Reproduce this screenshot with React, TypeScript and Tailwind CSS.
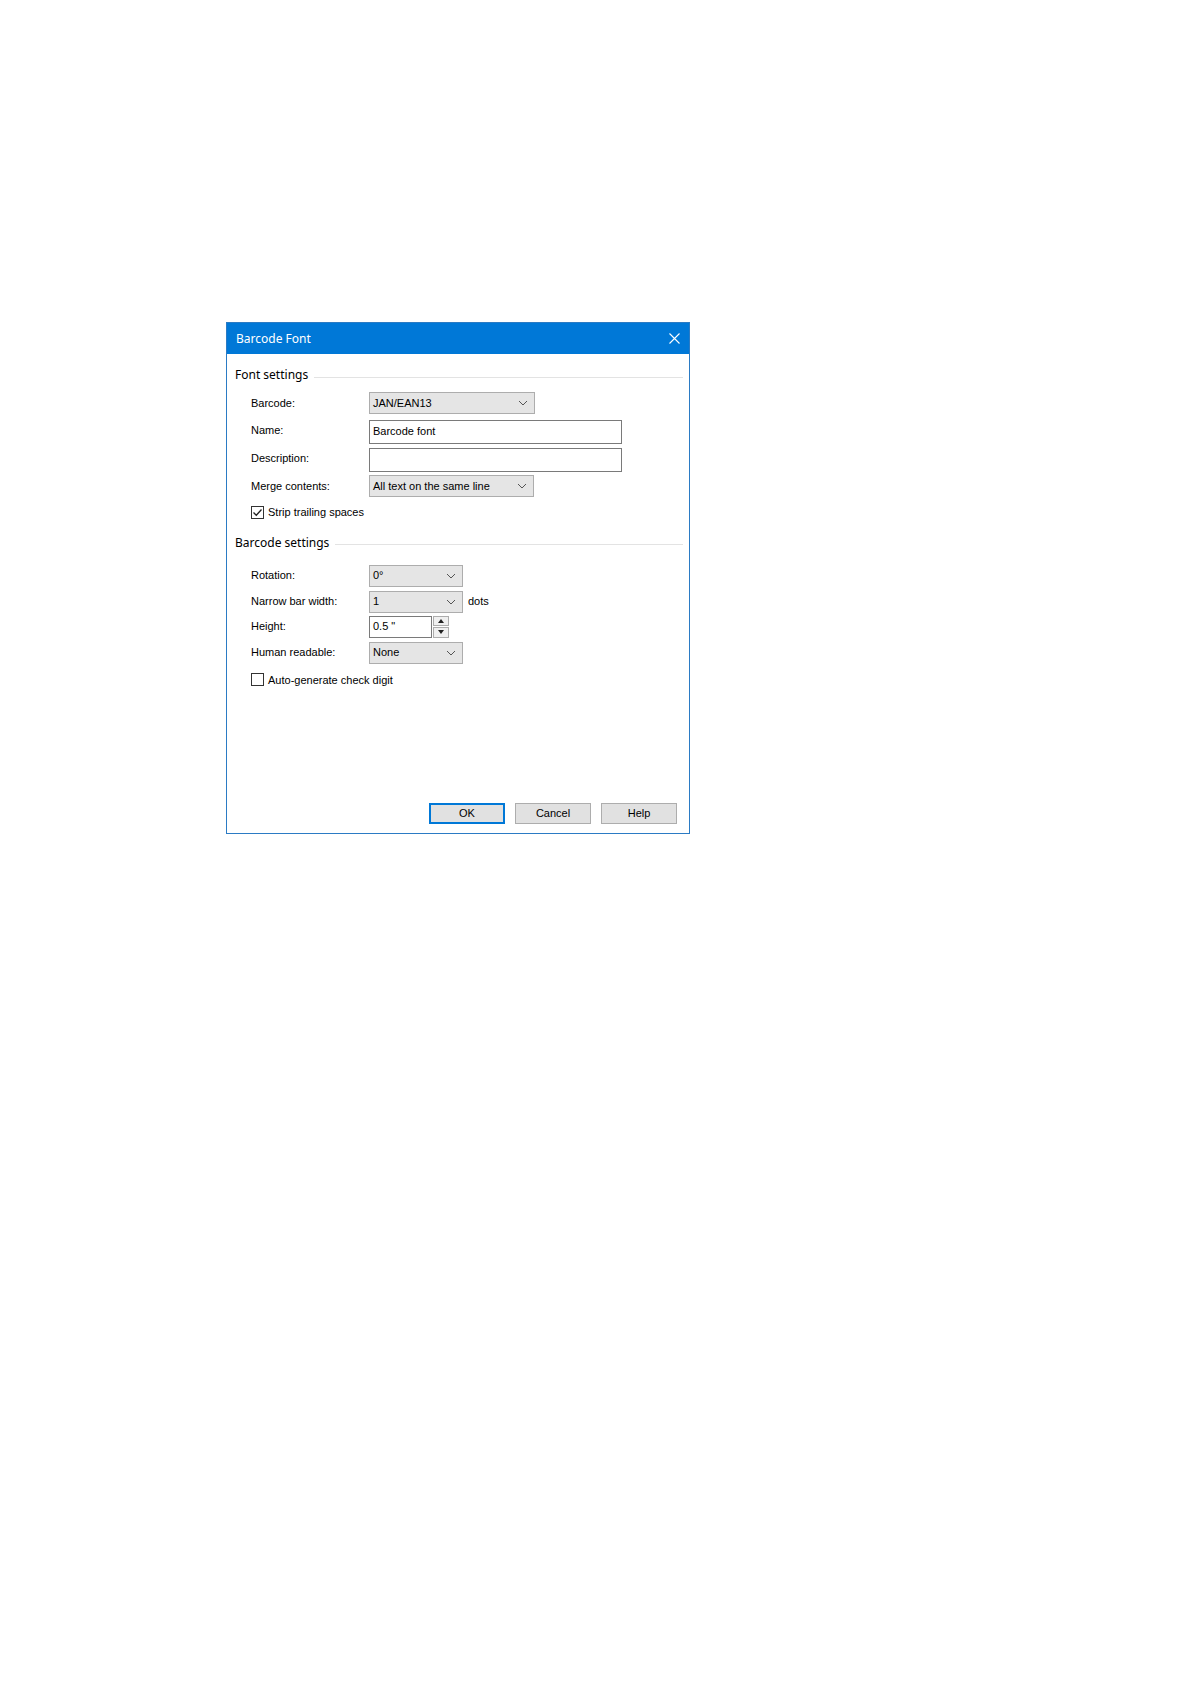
import React from "react";

const labelFont = "font-['Liberation_Sans',Arial,sans-serif] text-[11px] text-black";
const uiFont = "font-['Noto_Sans','Open_Sans',sans-serif]";

const Chevron = () => (
  <svg width="10" height="6" viewBox="0 0 10 6" className="shrink-0">
    <path d="M1 1 L5 5 L9 1" fill="none" stroke="#555" strokeWidth="1" />
  </svg>
);

const Dropdown = ({ value, width }: { value: string; width: string }) => (
  <div
    className={`flex h-[22px] items-center justify-between border border-[#adadad] bg-[#e5e5e5] pl-[3px] pr-[6px] ${width}`}
  >
    <span className={labelFont}>{value}</span>
    <Chevron />
  </div>
);

const TextBox = ({ value, width }: { value?: string; width: string }) => (
  <div
    className={`flex h-[24px] items-center border border-[#7a7a7a] bg-white pl-[3px] pb-[2px] ${width}`}
  >
    <span className={labelFont}>{value}</span>
  </div>
);

const Row = ({
  label,
  children,
  className,
  labelClass,
}: {
  label: string;
  children: React.ReactNode;
  className?: string;
  labelClass?: string;
}) => (
  <div className={`flex items-center pl-[24px] ${className ?? ""}`}>
    <div className={`w-[118px] ${labelFont} ${labelClass ?? ""}`}>{label}</div>
    {children}
  </div>
);

const GroupHeader = ({ title, className }: { title: string; className?: string }) => (
  <div className={`flex h-[16px] items-center pl-[8px] pr-[6px] ${className ?? ""}`}>
    <span className={`${uiFont} text-[12px] leading-none text-black`}>{title}</span>
    <div className="ml-[6px] mt-[4px] h-px flex-1 bg-[#e3e3e3]" />
  </div>
);

const CheckBox = ({ checked, label, className }: { checked?: boolean; label: string; className?: string }) => (
  <div className={`flex items-center pl-[24px] ${className ?? ""}`}>
    <div className="flex h-[13px] w-[13px] items-center justify-center border border-[#333] bg-white">
      {checked && (
        <svg width="11" height="11" viewBox="0 0 11 11">
          <path d="M1.5 5.5 L4.3 8.3 L9.5 2.5" fill="none" stroke="#222" strokeWidth="1.3" />
        </svg>
      )}
    </div>
    <span className={`ml-[4px] ${labelFont}`}>{label}</span>
  </div>
);

const DialogButton = ({ label, primary }: { label: string; primary?: boolean }) => (
  <div
    className={`flex h-[21px] w-[76px] items-center justify-center bg-[#e1e1e1] ${
      primary ? "border-2 border-[#0078d7]" : "border border-[#adadad]"
    } ${labelFont}`}
  >
    {label}
  </div>
);

export default function App() {
  return (
    <div className="min-h-[1684px] w-full bg-white pl-[226px] pt-[322px]">
      <div className="flex h-[512px] w-[464px] flex-col border border-[#2b7bc4] bg-white">
        <div className="flex h-[31px] items-center justify-between bg-[#0078d7] pl-[9px] pr-[9px]">
          <span className={`${uiFont} text-[12px] text-white`}>Barcode Font</span>
          <svg width="11" height="11" viewBox="0 0 11 11">
            <path d="M0.5 0.5 L10.5 10.5 M10.5 0.5 L0.5 10.5" stroke="#fff" strokeWidth="1.1" />
          </svg>
        </div>

        <GroupHeader title="Font settings" className="mt-[13px]" />
        <Row label="Barcode:" className="mt-[9px]">
          <Dropdown value="JAN/EAN13" width="w-[166px]" />
        </Row>
        <Row label="Name:" className="mt-[6px]" labelClass="pb-[3px]">
          <TextBox value="Barcode font" width="w-[253px]" />
        </Row>
        <Row label="Description:" className="mt-[4px]" labelClass="pb-[3px]">
          <TextBox width="w-[253px]" />
        </Row>
        <Row label="Merge contents:" className="mt-[3px]">
          <Dropdown value="All text on the same line" width="w-[165px]" />
        </Row>
        <CheckBox checked label="Strip trailing spaces" className="mt-[7px]" />

        <GroupHeader title="Barcode settings" className="mt-[14px]" />
        <Row label="Rotation:" className="mt-[14px]">
          <Dropdown value="0°" width="w-[94px]" />
        </Row>
        <Row label="Narrow bar width:" className="mt-[4px]">
          <Dropdown value="1" width="w-[94px]" />
          <span className={`ml-[5px] ${labelFont}`}>dots</span>
        </Row>
        <Row label="Height:" className="mt-[3px]">
          <div className="flex h-[22px] w-[63px] items-center border border-[#7a7a7a] bg-white pl-[3px] pb-[1px]">
            <span className={labelFont}>0.5 "</span>
          </div>
          <div className="ml-[1px] flex h-[22px] w-[16px] flex-col gap-px">
            <div className="flex flex-1 items-center justify-center border border-[#adadad] bg-[#f0f0f0]">
              <svg width="6" height="4" viewBox="0 0 6 4">
                <path d="M0 4 L3 0 L6 4 Z" fill="#222" />
              </svg>
            </div>
            <div className="flex flex-1 items-center justify-center border border-[#adadad] bg-[#f0f0f0]">
              <svg width="6" height="4" viewBox="0 0 6 4">
                <path d="M0 0 L6 0 L3 4 Z" fill="#222" />
              </svg>
            </div>
          </div>
        </Row>
        <Row label="Human readable:" className="mt-[4px]">
          <Dropdown value="None" width="w-[94px]" />
        </Row>
        <CheckBox label="Auto-generate check digit" className="mt-[8px]" />

        <div className="mt-auto mb-[9px] flex justify-end gap-[10px] pr-[12px]">
          <DialogButton label="OK" primary />
          <DialogButton label="Cancel" />
          <DialogButton label="Help" />
        </div>
      </div>
    </div>
  );
}
